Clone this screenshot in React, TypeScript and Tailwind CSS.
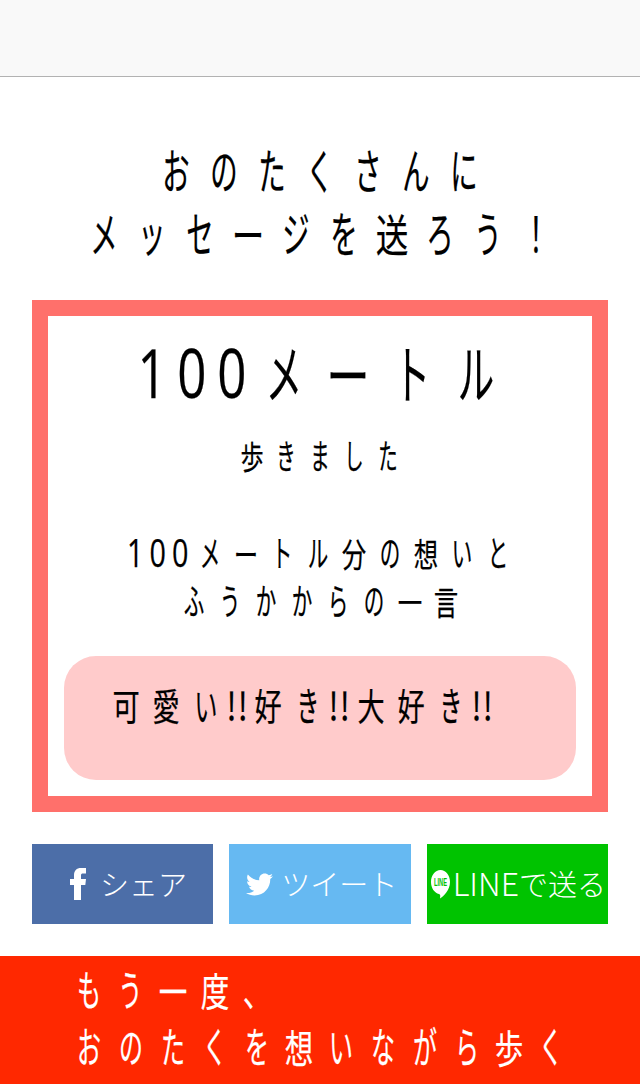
import React from 'react';
import { FaTwitter } from 'react-icons/fa';

type GlyphKind = 'kana' | 'wide' | 'digit' | 'bang';

interface GlyphMetrics {
  size: number; // font size, relative to the full-width cell
  scale: number; // horizontal squeeze
  cell: number; // cell width, relative to the full-width cell
  em: number; // natural advance of the glyph
}

const METRICS: Record<GlyphKind, GlyphMetrics> = {
  kana: { size: 1, scale: 0.57, cell: 1, em: 1 },
  wide: { size: 0.93, scale: 0.73, cell: 1, em: 1 },
  digit: { size: 1.05, scale: 0.76, cell: 0.625, em: 0.572 },
  bang: { size: 0.97, scale: 0.8, cell: 0.28, em: 0.324 },
};

const kindOf = (char: string): GlyphKind => {
  if (/[0-9]/.test(char)) return 'digit';
  if (char === '!') return 'bang';
  if (/[ぁ-んァ-ヶ\uff01]/.test(char)) return 'kana';
  return 'wide';
};

const splitRuns = (text: string) => {
  const runs: { kind: GlyphKind; text: string }[] = [];
  for (const char of text) {
    const kind = kindOf(char);
    const last = runs[runs.length - 1];
    if (last && last.kind === kind) last.text += char;
    else runs.push({ kind, text: char });
  }
  return runs;
};

interface LineProps {
  text: string;
  cell: number;
  className?: string;
}

// One line of condensed, widely spaced lettering
const Line: React.FC<LineProps> = ({ text, cell, className = '' }) => (
  <span className={`flex items-baseline whitespace-nowrap [-webkit-text-stroke:0.25px_currentColor] ${className}`}>
    {splitRuns(text).map((run, i) => {
      const m = METRICS[run.kind];
      const fontSize = cell * m.size;
      const tracking = (cell * m.cell) / m.scale - fontSize * m.em;
      return (
        <span
          key={i}
          className={`block shrink-0 origin-left ${run.kind === 'digit' ? "font-['Open_Sans',sans-serif]" : ''}`}
          style={{
            width: run.text.length * cell * m.cell,
            fontSize,
            letterSpacing: tracking,
            textIndent: tracking / 2,
            transform: `scaleX(${m.scale})`,
          }}
        >
          {run.text}
        </span>
      );
    })}
  </span>
);

const FacebookLogo = () => (
  <svg viewBox="0 0 16 32" className="h-8 w-4 shrink-0" fill="white">
    <path d="M4 32V17H0v-6h4V7.500C4 2.500 6.500 0 11 0h5v5.500h-3c-1.500 0-2 .5-2 2V11h5l-.7 6H11v15Z" />
  </svg>
);

const LineLogo = () => (
  <svg viewBox="0 0 19 29" className="h-[29px] w-[19px] shrink-0 overflow-visible">
    <path
      d="M9.500 0C4.250 0 0 5.400 0 12c0 6 3.500 11 8 12 1.300.3 1.500 1.500 1 4.500 3.500-2 10-8.500 10-16.500C19 5.400 14.750 0 9.500 0Z"
      fill="white"
    />
    <text
      x="9.500"
      y="15.800"
      textAnchor="middle"
      textLength="13"
      lengthAdjust="spacingAndGlyphs"
      fontFamily="Liberation Sans, sans-serif"
      fontWeight="bold"
      fontSize="11"
      fill="#00c300"
    >
      LINE
    </text>
  </svg>
);

export default function App() {
  return (
    <div className="h-[1084px] w-[640px] overflow-hidden bg-white font-['Noto_Sans_CJK_JP',sans-serif] text-black">
      <header className="h-[77px] border-b border-[#b2b2b2] bg-[#f9f9f9]" />

      <main className="px-8">
        <h1 className="flex h-[223px] flex-col items-center pt-[60px] leading-[63px]">
          <Line text="おのたくさんに" cell={48} />
          <Line text="メッセージを送ろう！" cell={48} />
        </h1>

        <section className="flex h-[512px] flex-col border-[16px] border-[#ff706b] px-4 pb-4">
          <p className="mt-[13px] flex h-[83px] justify-center leading-[83px]">
            <Line text="100メートル" cell={64} />
          </p>
          <p className="mt-[21px] flex h-[44px] justify-center leading-[44px]">
            <Line text="歩きました" cell={34} />
          </p>
          <p className="mt-[51px] flex flex-col items-center leading-[46px]">
            <Line text="100メートル分の想いと" cell={36} />
            <Line text="ふうかからの一言" cell={36} />
          </p>
          <div className="mt-auto h-[124px] rounded-[32px] bg-[#ffcbcb] pt-[22px] pl-[42px] leading-[52px]">
            <Line text="可愛い!!好き!!大好き!!" cell={40} />
          </div>
        </section>

        <nav className="mt-8 grid grid-cols-3 gap-4 text-[29px] font-light text-white">
          <a className="flex h-20 items-center bg-[#4c6ea8] pl-[38px]">
            <FacebookLogo />
            <span className="ml-[14px] whitespace-nowrap">シェア</span>
          </a>
          <a className="flex h-20 items-center bg-[#66b9f2] pl-[17px]">
            <FaTwitter className="size-[27px] shrink-0" />
            <span className="ml-[8px] whitespace-nowrap">ツイート</span>
          </a>
          <a className="flex h-20 items-center bg-[#00c300] pl-1">
            <LineLogo />
            <span className="mb-1 ml-[3px] whitespace-nowrap">
              <span className="text-[32px]">LINE</span>で送る
            </span>
          </a>
        </nav>
      </main>

      <footer className="mt-8 flex h-32 flex-col bg-[#ff2800] pt-1 pl-[68px] leading-[55px] text-white">
        <Line text="もう一度、" cell={42} />
        <Line text="おのたくを想いながら歩く" cell={42} />
      </footer>
    </div>
  );
}
